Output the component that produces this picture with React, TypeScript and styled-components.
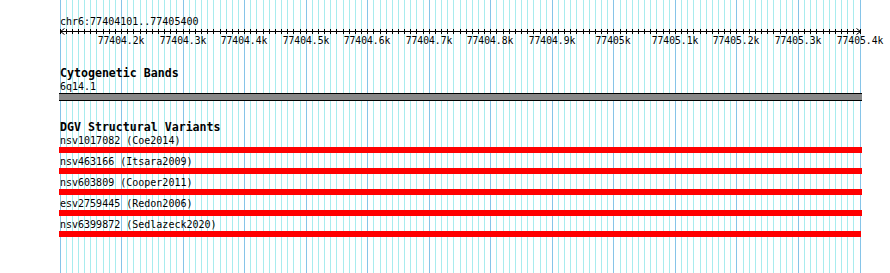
import React from 'react';
import styled, { createGlobalStyle } from 'styled-components';

const GlobalStyle = createGlobalStyle`
  html, body { margin: 0; padding: 0; background: #ffffff; }
  body { font-family: "DejaVu Sans Mono", "Liberation Mono", monospace; color: #000; }
`;

const START_BP = 77404100;
const PX_PER_BP = 800 / 1300;
const xOf = (bp: number) => Math.round(59.5 + (bp - START_BP) * PX_PER_BP);

const Page = styled.div`
  position: relative;
  width: 890px;
  height: 273px;
  overflow: hidden;
  background: #ffffff;
`;

const GridLayer = styled.svg`
  position: absolute;
  left: 0;
  top: 0;
  width: 890px;
  height: 273px;
  z-index: 0;
`;

const Content = styled.div`
  position: relative;
  z-index: 1;
  display: flex;
  flex-direction: column;
  padding-top: 15px;
`;

const Location = styled.div`
  padding-left: 60px;
  font: 10px/13px "DejaVu Sans Mono", monospace;
  height: 13px;
  white-space: nowrap;
`;

const Ruler = styled.svg`
  display: block;
  width: 890px;
  height: 20px;
  overflow: visible;
`;

const RulerLabel = styled.text`
  font-family: "DejaVu Sans Mono", monospace;
  font-size: 9.7px;
  fill: #000;
`;

const Track = styled.section<{ $gap: number }>`
  display: flex;
  flex-direction: column;
  padding-left: 59px;
  margin-top: ${(p) => p.$gap}px;
`;

const TrackTitle = styled.div`
  padding-left: 1px;
  font: bold 11.6px/13px "DejaVu Sans Mono", monospace;
  height: 13px;
  white-space: nowrap;
`;

const FeatureLabel = styled.div`
  padding-left: 1px;
  font: 10px/13px "DejaVu Sans Mono", monospace;
  height: 13px;
  white-space: nowrap;
`;

const Band = styled.div`
  width: 803px;
  height: 6px;
  background: #888888;
  border-top: 1px solid #000;
  border-bottom: 1px solid #000;
`;

const VariantRow = styled.div`
  display: flex;
  flex-direction: column;
  margin-bottom: 2px;
`;

const VariantBar = styled.div<{ $width: number }>`
  width: ${(p) => p.$width}px;
  height: 6px;
  background: #ff0000;
`;

const variants = [
  { id: 'nsv1017082', study: 'Coe2014', width: 803 },
  { id: 'nsv463166', study: 'Itsara2009', width: 803 },
  { id: 'nsv603809', study: 'Cooper2011', width: 803 },
  { id: 'esv2759445', study: 'Redon2006', width: 803 },
  { id: 'nsv6399872', study: 'Sedlazeck2020', width: 802 },
];

const gridLines = Array.from({ length: 131 }, (_, i) => ({
  x: xOf(START_BP + i * 10),
  major: i % 10 === 0,
}));

const majorTicks = Array.from({ length: 13 }, (_, i) => {
  const bp = START_BP + (i + 1) * 100;
  const k = bp / 1000;
  const label = Number.isInteger(k) ? `${k}k` : `${k.toFixed(1)}k`;
  return { x: xOf(bp), label };
});

export default function App() {
  return (
    <>
      <GlobalStyle />
      <Page>
        <GridLayer viewBox="0 0 890 273" shapeRendering="crispEdges">
          {gridLines
            .filter((l) => !l.major)
            .map((l) => (
              <line key={`m${l.x}`} x1={l.x + 0.5} x2={l.x + 0.5} y1={0} y2={273} stroke="#a8ecee" strokeWidth={1} />
            ))}
          {gridLines
            .filter((l) => l.major)
            .map((l) => (
              <line key={`M${l.x}`} x1={l.x + 0.5} x2={l.x + 0.5} y1={0} y2={273} stroke="#86c4e8" strokeWidth={1} />
            ))}
        </GridLayer>
        <Content>
          <Location>chr6:77404101..77405400</Location>
          <Ruler viewBox="0 0 890 20">
            <g shapeRendering="crispEdges">
              <line x1={60} x2={861} y1={3.5} y2={3.5} stroke="#000" strokeWidth={1} />
              {gridLines.map((l) => (
                <line key={`t${l.x}`} x1={l.x + 0.5} x2={l.x + 0.5} y1={1} y2={6} stroke="#000" strokeWidth={1} />
              ))}
            </g>
            <polyline points="64.5,0.5 60.5,3.5 64.5,6.5" fill="none" stroke="#000" strokeWidth={1} />
            <polyline points="856.5,0.5 860.5,3.5 856.5,6.5" fill="none" stroke="#000" strokeWidth={1} />
            {majorTicks.map((t) => (
              <RulerLabel key={t.label} x={t.x} y={15.6} textAnchor="middle">
                {t.label}
              </RulerLabel>
            ))}
          </Ruler>
          <Track $gap={19}>
            <TrackTitle>Cytogenetic Bands</TrackTitle>
            <FeatureLabel>6q14.1</FeatureLabel>
            <Band />
          </Track>
          <Track $gap={20}>
            <TrackTitle>DGV Structural Variants</TrackTitle>
            {variants.map((v) => (
              <VariantRow key={v.id}>
                <FeatureLabel>
                  {v.id} ({v.study})
                </FeatureLabel>
                <VariantBar $width={v.width} />
              </VariantRow>
            ))}
          </Track>
        </Content>
      </Page>
    </>
  );
}
